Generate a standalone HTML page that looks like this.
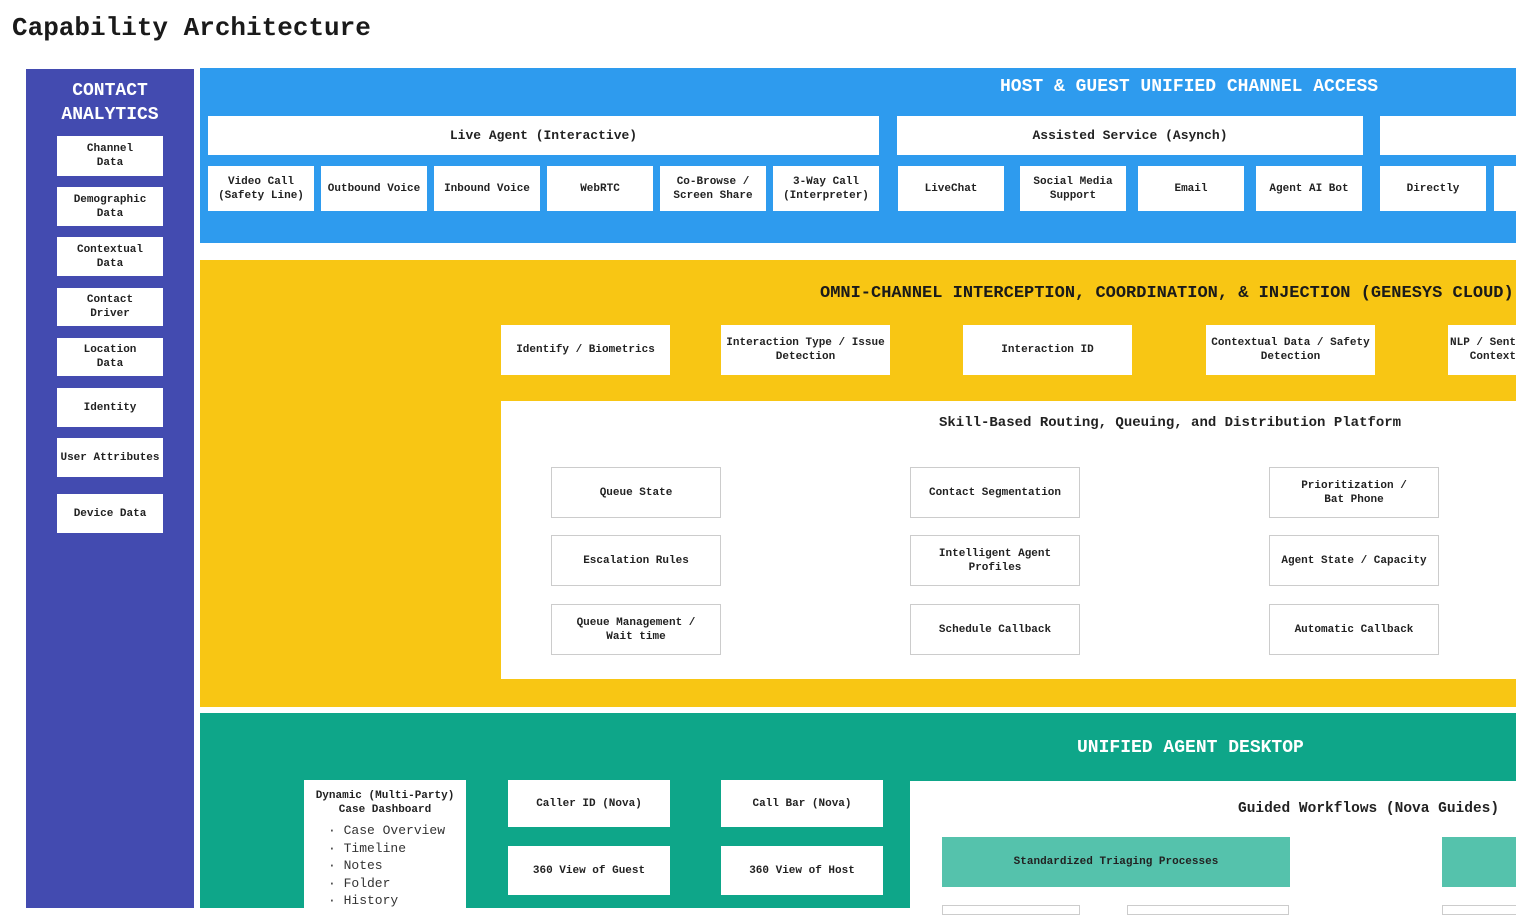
<!DOCTYPE html>
<html><head><meta charset="utf-8"><style>
*{margin:0;padding:0;box-sizing:border-box}
body{width:1516px;height:908px;overflow:hidden;background:#fff;position:relative;font-family:"Liberation Mono",monospace;font-weight:bold;color:#222}
.a{position:absolute}
.b{position:absolute;background:#fff;display:flex;align-items:center;justify-content:center;text-align:center;font-size:11px;line-height:14px;color:#222}
.g{border:1px solid #ccc}
.h{position:absolute;color:#fff;font-family:"Liberation Mono",monospace;font-weight:bold;font-size:18px;white-space:nowrap}
</style></head><body>
<div class="a" style="left:12px;top:13px;font-size:26px;color:#1a1a1a">Capability Architecture</div>

<div class="a" style="left:26px;top:69px;width:168px;height:839px;background:#434bb0"></div>
<div class="h" style="left:26px;top:79px;width:168px;text-align:center;line-height:24px">CONTACT<br>ANALYTICS</div>
<div class="b" style="left:57px;top:136px;width:106px;height:40px">Channel<br>Data</div>
<div class="b" style="left:57px;top:187px;width:106px;height:39px">Demographic<br>Data</div>
<div class="b" style="left:57px;top:237px;width:106px;height:39px">Contextual<br>Data</div>
<div class="b" style="left:57px;top:288px;width:106px;height:38px">Contact<br>Driver</div>
<div class="b" style="left:57px;top:338px;width:106px;height:38px">Location<br>Data</div>
<div class="b" style="left:57px;top:388px;width:106px;height:39px">Identity</div>
<div class="b" style="left:57px;top:438px;width:106px;height:39px">User Attributes</div>
<div class="b" style="left:57px;top:494px;width:106px;height:39px">Device Data</div>

<div class="a" style="left:200px;top:68px;width:1316px;height:175px;background:#2e9bee"></div>
<div class="h" style="left:1000px;top:77px">HOST &amp; GUEST UNIFIED CHANNEL ACCESS</div>
<div class="b" style="left:208px;top:116px;width:671px;height:39px;font-size:13px">Live Agent (Interactive)</div>
<div class="b" style="left:897px;top:116px;width:466px;height:39px;font-size:13px">Assisted Service (Asynch)</div>
<div class="b" style="left:1380px;top:116px;width:140px;height:39px"></div>
<div class="b" style="left:208px;top:166px;width:106px;height:45px">Video Call<br>(Safety Line)</div>
<div class="b" style="left:321px;top:166px;width:106px;height:45px">Outbound Voice</div>
<div class="b" style="left:434px;top:166px;width:106px;height:45px">Inbound Voice</div>
<div class="b" style="left:547px;top:166px;width:106px;height:45px">WebRTC</div>
<div class="b" style="left:660px;top:166px;width:106px;height:45px">Co-Browse /<br>Screen Share</div>
<div class="b" style="left:773px;top:166px;width:106px;height:45px">3-Way Call<br>(Interpreter)</div>
<div class="b" style="left:898px;top:166px;width:106px;height:45px">LiveChat</div>
<div class="b" style="left:1020px;top:166px;width:106px;height:45px">Social Media<br>Support</div>
<div class="b" style="left:1138px;top:166px;width:106px;height:45px">Email</div>
<div class="b" style="left:1256px;top:166px;width:106px;height:45px">Agent AI Bot</div>
<div class="b" style="left:1380px;top:166px;width:106px;height:45px">Directly</div>
<div class="b" style="left:1494px;top:166px;width:40px;height:45px"></div>

<div class="a" style="left:200px;top:260px;width:1316px;height:447px;background:#f8c614"></div>
<div class="a" style="left:820px;top:284px;font-size:17px;color:#1a1a1a;white-space:nowrap">OMNI-CHANNEL INTERCEPTION, COORDINATION, &amp; INJECTION (GENESYS CLOUD)</div>
<div class="b" style="left:501px;top:325px;width:169px;height:50px">Identify / Biometrics</div>
<div class="b" style="left:721px;top:325px;width:169px;height:50px">Interaction Type / Issue<br>Detection</div>
<div class="b" style="left:963px;top:325px;width:169px;height:50px">Interaction ID</div>
<div class="b" style="left:1206px;top:325px;width:169px;height:50px">Contextual Data / Safety<br>Detection</div>
<div class="b" style="left:1448px;top:325px;width:169px;height:50px;justify-content:flex-start;padding-left:2px;text-align:left">NLP / Sentiment<br>&nbsp;&nbsp;&nbsp;Context</div>
<div class="a" style="left:501px;top:401px;width:1015px;height:278px;background:#fff"></div>
<div class="a" style="left:939px;top:415px;font-size:14px;white-space:nowrap">Skill-Based Routing, Queuing, and Distribution Platform</div>
<div class="b g" style="left:551px;top:467px;width:170px;height:51px">Queue State</div>
<div class="b g" style="left:910px;top:467px;width:170px;height:51px">Contact Segmentation</div>
<div class="b g" style="left:1269px;top:467px;width:170px;height:51px">Prioritization /<br>Bat Phone</div>
<div class="b g" style="left:551px;top:535px;width:170px;height:51px">Escalation Rules</div>
<div class="b g" style="left:910px;top:535px;width:170px;height:51px">Intelligent Agent<br>Profiles</div>
<div class="b g" style="left:1269px;top:535px;width:170px;height:51px">Agent State / Capacity</div>
<div class="b g" style="left:551px;top:604px;width:170px;height:51px">Queue Management /<br>Wait time</div>
<div class="b g" style="left:910px;top:604px;width:170px;height:51px">Schedule Callback</div>
<div class="b g" style="left:1269px;top:604px;width:170px;height:51px">Automatic Callback</div>

<div class="a" style="left:200px;top:713px;width:1316px;height:195px;background:#0ea689"></div>
<div class="h" style="left:1077px;top:738px">UNIFIED AGENT DESKTOP</div>
<div class="a" style="left:304px;top:780px;width:162px;height:140px;background:#fff;font-size:11px;line-height:14px;padding-top:9px">
<div style="text-align:center">Dynamic (Multi-Party)<br>Case Dashboard</div>
<div style="font-weight:normal;font-size:13px;line-height:17.5px;padding-left:24px;margin-top:5px;color:#333">· Case Overview<br>· Timeline<br>· Notes<br>· Folder<br>· History</div>
</div>
<div class="b" style="left:508px;top:780px;width:162px;height:47px">Caller ID (Nova)</div>
<div class="b" style="left:721px;top:780px;width:162px;height:47px">Call Bar (Nova)</div>
<div class="b" style="left:508px;top:846px;width:162px;height:49px">360 View of Guest</div>
<div class="b" style="left:721px;top:846px;width:162px;height:49px">360 View of Host</div>
<div class="a" style="left:910px;top:781px;width:606px;height:127px;background:#fff"></div>
<div class="a" style="left:1238px;top:801px;font-size:14.5px;white-space:nowrap">Guided Workflows (Nova Guides)</div>
<div class="b" style="left:942px;top:837px;width:348px;height:50px;background:#55c2ac">Standardized Triaging Processes</div>
<div class="b" style="left:1442px;top:837px;width:100px;height:50px;background:#55c2ac"></div>
<div class="a g" style="left:942px;top:905px;width:138px;height:10px"></div>
<div class="a g" style="left:1127px;top:905px;width:162px;height:10px"></div>
<div class="a g" style="left:1442px;top:905px;width:100px;height:10px"></div>
</body></html>
